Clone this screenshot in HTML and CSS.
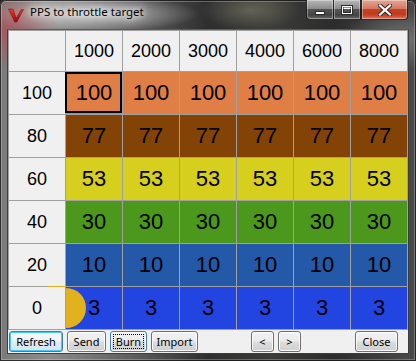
FILE: index.html
```html
<!DOCTYPE html>
<html>
<head>
<meta charset="utf-8">
<link rel="stylesheet" href="styles.css">
</head>
<body>
<div class="window">
  <div class="titlebar">
    <svg class="appicon" width="16" height="16" viewBox="0 0 16 16">
      <defs>
        <linearGradient id="vg" x1="0" y1="0" x2="0" y2="1">
          <stop offset="0" stop-color="#f03a2a"/>
          <stop offset="1" stop-color="#a00808"/>
        </linearGradient>
      </defs>
      <path d="M0.5 2 L5 2 L8.2 11.5 L13.2 2.6 L15.5 2.6 L8.8 15 L6.8 15 Z" fill="url(#vg)" stroke="#6a0606" stroke-width="0.5"/>
    </svg>
    <div class="title">PPS to throttle target</div>
    <div class="captions">
      <div class="cbtn cmin">
        <svg width="12" height="6" viewBox="0 0 12 6"><rect x="1.5" y="1.5" width="9" height="3" fill="#fff" stroke="#2a2a2a"/></svg>
      </div>
      <div class="cbtn cmax">
        <svg width="12" height="10" viewBox="0 0 12 10"><rect x="1.5" y="1.5" width="9" height="7" fill="none" stroke="#2a2a2a" stroke-width="3"/><rect x="1.5" y="1.5" width="9" height="7" fill="none" stroke="#fff" stroke-width="1"/><rect x="2.5" y="2.5" width="7" height="1.5" fill="#fff"/></svg>
      </div>
      <div class="cbtn cclose">
        <svg width="14" height="12" viewBox="0 0 14 12"><path d="M2 1.5 L12 10.5 M12 1.5 L2 10.5" stroke="#3a2a28" stroke-width="4.2" stroke-linecap="square"/><path d="M2 1.5 L12 10.5 M12 1.5 L2 10.5" stroke="#fff" stroke-width="2.2" stroke-linecap="square"/></svg>
      </div>
    </div>
  </div>
  <div class="client">
    <div class="grid">
      <div class="cell h"></div>
      <div class="cell h">1000</div>
      <div class="cell h">2000</div>
      <div class="cell h">3000</div>
      <div class="cell h">4000</div>
      <div class="cell h">6000</div>
      <div class="cell h">8000</div>

      <div class="cell h">100</div>
      <div class="cell d r100 sel">100</div>
      <div class="cell d r100">100</div>
      <div class="cell d r100">100</div>
      <div class="cell d r100">100</div>
      <div class="cell d r100">100</div>
      <div class="cell d r100">100</div>

      <div class="cell h">80</div>
      <div class="cell d r80">77</div>
      <div class="cell d r80">77</div>
      <div class="cell d r80">77</div>
      <div class="cell d r80">77</div>
      <div class="cell d r80">77</div>
      <div class="cell d r80">77</div>

      <div class="cell h">60</div>
      <div class="cell d r60">53</div>
      <div class="cell d r60">53</div>
      <div class="cell d r60">53</div>
      <div class="cell d r60">53</div>
      <div class="cell d r60">53</div>
      <div class="cell d r60">53</div>

      <div class="cell h">40</div>
      <div class="cell d r40">30</div>
      <div class="cell d r40">30</div>
      <div class="cell d r40">30</div>
      <div class="cell d r40">30</div>
      <div class="cell d r40">30</div>
      <div class="cell d r40">30</div>

      <div class="cell h">20</div>
      <div class="cell d r20">10</div>
      <div class="cell d r20">10</div>
      <div class="cell d r20">10</div>
      <div class="cell d r20">10</div>
      <div class="cell d r20">10</div>
      <div class="cell d r20">10</div>

      <div class="cell h marked">0<span class="glitch"></span></div>
      <div class="cell d r0 dot"><span class="half"></span><span class="num">3</span></div>
      <div class="cell d r0">3</div>
      <div class="cell d r0">3</div>
      <div class="cell d r0">3</div>
      <div class="cell d r0">3</div>
      <div class="cell d r0">3</div>
    </div>
    <div class="buttons">
      <div class="btn default w-refresh">Refresh</div>
      <div class="btn w-send">Send</div>
      <div class="btn focus w-burn"><span class="focusring">Burn</span></div>
      <div class="btn w-import">Import</div>
      <div class="btn w-arrow gap-nav">&lt;</div>
      <div class="btn w-arrow">&gt;</div>
      <div class="btn w-close gap-close">Close</div>
    </div>
  </div>
</div>
</body>
</html>
```

FILE: styles.css
```css
html, body {
  margin: 0;
  padding: 0;
}
body {
  width: 416px;
  height: 361px;
  overflow: hidden;
  background: #2a2a2a;
  font-family: "Noto Sans", "Open Sans", sans-serif;
}
.window {
  width: 416px;
  height: 361px;
  display: flex;
  flex-direction: column;
  background:
    radial-gradient(ellipse 60px 40px at 0px 30px, rgba(200,60,70,0.55), rgba(200,60,70,0) 100%),
    radial-gradient(ellipse 110px 18px at 90px 14px, rgba(230,230,230,0.75), rgba(230,230,230,0) 100%),
    radial-gradient(ellipse 50px 20px at 250px 10px, rgba(140,140,120,0.5), rgba(140,140,120,0) 100%),
    radial-gradient(ellipse 60px 30px at 400px 40px, rgba(160,160,160,0.5), rgba(160,160,160,0) 100%),
    linear-gradient(to right, #7a7a7a 0%, #8c8c8c 12%, #5e5e5e 32%, #2e2e2e 50%, #3c3c38 65%, #2c2c2c 80%, #4a4a4a 100%);
  border-radius: 6px 6px 0 0;
  box-shadow: inset 0 0 0 1px rgba(0,0,0,0.7), inset 0 0 0 2px rgba(255,255,255,0.25);
}
.titlebar {
  height: 29px;
  display: flex;
  align-items: flex-start;
  flex: none;
}
.appicon {
  margin: 7px 0 0 8px;
  flex: none;
}
.title {
  margin: 4px 0 0 6px;
  font-size: 11.5px;
  line-height: 16px;
  color: #000;
  text-shadow: 0 0 6px #fff, 0 0 10px rgba(255,255,255,0.9), 0 0 14px rgba(255,255,255,0.7);
}
.captions {
  margin-left: auto;
  margin-right: 8px;
  display: flex;
  height: 20px;
}
.cbtn {
  height: 19px;
  display: flex;
  align-items: center;
  justify-content: center;
  border: 1px solid rgba(20,20,20,0.85);
  border-top: none;
  box-shadow: inset 0 0 0 1px rgba(255,255,255,0.35);
}
.cmin {
  width: 26px;
  border-radius: 0 0 0 4px;
  border-right: none;
  background: linear-gradient(#b8b8b8 0%, #8c8c8c 45%, #555 50%, #444 80%, #6a6a6a 100%);
}
.cmin svg { margin-top: 6px; }
.cmax {
  width: 26px;
  background: linear-gradient(#b8b8b8 0%, #8c8c8c 45%, #555 50%, #444 80%, #6a6a6a 100%);
}
.cclose {
  width: 45px;
  border-radius: 0 0 4px 0;
  border-left: 1px solid rgba(20,20,20,0.85);
  background: linear-gradient(#e4a696 0%, #d67762 45%, #c44126 50%, #c23a1e 75%, #d8745c 100%);
}
.client {
  margin: 0 7px;
  border: 1px solid #3e3e3e;
  border-top-color: #5a5a5a;
  background: #f0f0f0;
  flex: none;
  height: 323px;
}
.grid {
  display: grid;
  grid-template-columns: repeat(7, 56px);
  grid-template-rows: 40px repeat(6, 42px);
  gap: 1px;
  padding: 1px;
  width: 400px;
  box-sizing: border-box;
  background: #a0a0a0;
  font-family: "Liberation Sans", Arial, sans-serif;
}
.cell {
  display: flex;
  align-items: center;
  justify-content: center;
  color: #000;
  position: relative;
}
.h {
  background: #f0f0f0;
  font-size: 18px;
}
.d {
  font-size: 22px;
}
.r100 { background: #e07f45; }
.r80 { background: #834306; }
.r60 { background: #d6cf1e; }
.r40 { background: #4b981c; }
.r20 { background: #2359a8; }
.r0 { background: #2245e2; }
.sel::after {
  content: "";
  position: absolute;
  left: -1px;
  top: 0;
  right: 0;
  bottom: 1px;
  border: 2px solid #000;
}
.dot { overflow: hidden; }
.half {
  position: absolute;
  left: -20px;
  top: 1px;
  width: 40px;
  height: 40px;
  border-radius: 50%;
  background: #e2b21e;
}
.num { position: relative; }
.glitch {
  position: absolute;
  right: -1px;
  top: -1px;
  width: 18px;
  height: 1px;
  background: #e2b21e;
}
.buttons {
  display: flex;
  margin-top: 1px;
  padding-left: 1px;
  gap: 4px;
  height: 21px;
}
.btn {
  box-sizing: border-box;
  height: 21px;
  display: flex;
  align-items: center;
  justify-content: center;
  font-family: "Noto Sans", "Open Sans", sans-serif;
  font-size: 11px;
  color: #000;
  border: 1px solid #707070;
  border-radius: 3px;
  background: linear-gradient(#f2f2f2 0%, #ebebeb 48%, #dddddd 52%, #cfcfcf 100%);
  box-shadow: inset 0 0 0 1px #fbfbfb;
}
.btn.default {
  border-color: #3c7fb1;
  background: linear-gradient(#eaf6fd 0%, #d9f0fc 48%, #bee6fd 52%, #a7d9f5 100%);
  background: linear-gradient(#f4f8fb 0%, #eef4f8 48%, #e2ecf3 52%, #d6e4ee 100%);
  box-shadow: inset 0 0 0 1px #48c8f4;
}
.btn.focus {
  border-color: #3c7fb1;
  box-shadow: inset 0 0 0 1px #fbfbfb;
}
.focusring {
  display: flex;
  align-items: center;
  justify-content: center;
  width: calc(100% - 6px);
  height: calc(100% - 6px);
  outline: 1px dotted #000;
}
.w-refresh { width: 54px; }
.w-send { width: 39px; }
.w-burn { width: 37px; }
.w-import { width: 47px; }
.w-arrow { width: 23px; }
.w-close { width: 43px; }
.gap-nav { margin-left: 49px; }
.gap-close { margin-left: 50px; }
```
